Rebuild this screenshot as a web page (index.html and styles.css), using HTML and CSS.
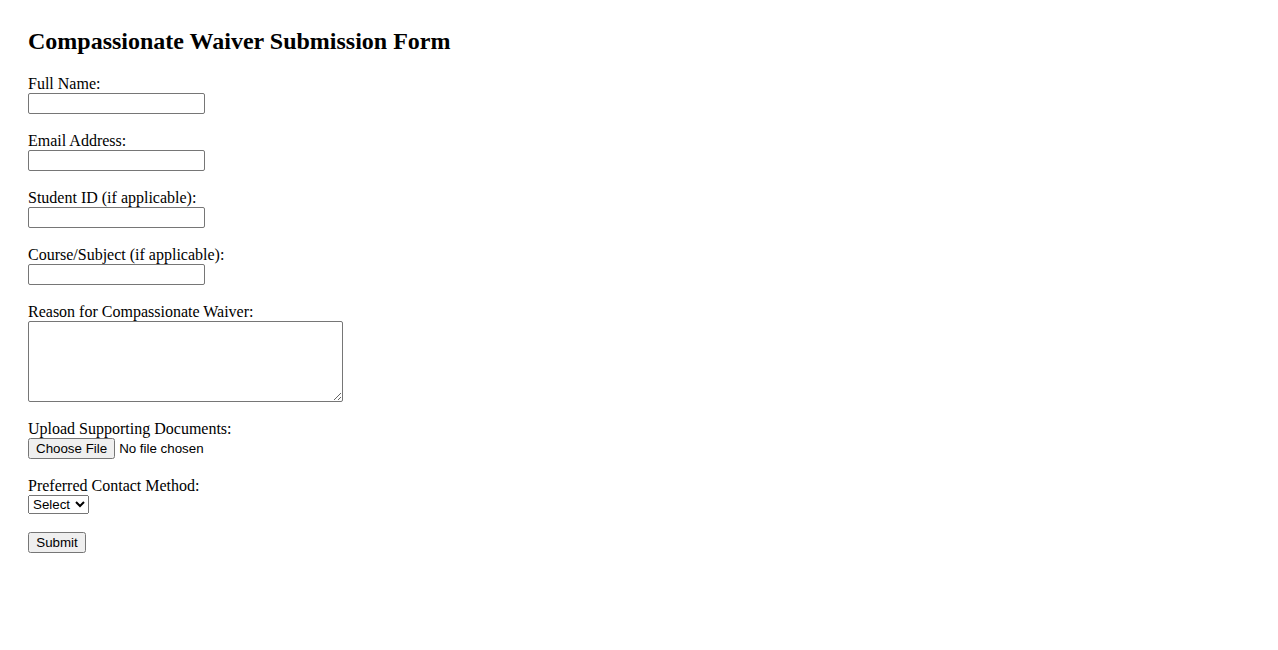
FILE: index.html
```html
<!DOCTYPE html>
<html lang="en">
<head>
<meta charset="utf-8">
<title>Compassionate Waiver Submission Form</title>
<link rel="stylesheet" href="styles.css">
</head>
<body>
<h2 class="title">Compassionate Waiver Submission Form</h2>
<form class="waiver-form">
<label for="name">Full Name:</label><br>
<input type="text" id="name" name="name" class="field"><br><br>
<label for="email">Email Address:</label><br>
<input type="email" id="email" name="email" class="field"><br><br>
<label for="sid">Student ID (if applicable):</label><br>
<input type="text" id="sid" name="sid" class="field"><br><br>
<label for="course">Course/Subject (if applicable):</label><br>
<input type="text" id="course" name="course" class="field"><br><br>
<label for="reason">Reason for Compassionate Waiver:</label><br>
<textarea id="reason" name="reason" class="reason"></textarea><br><br>
<label for="docs">Upload Supporting Documents:</label><br>
<input type="file" id="docs" name="docs" class="file"><br><br>
<label for="contact">Preferred Contact Method:</label><br>
<select id="contact" name="contact" class="select">
<option>Select</option>
<option>Email</option>
<option>Phone</option>
</select><br><br>
<input type="submit" value="Submit" class="submit">
</form>
</body>
</html>
```

FILE: styles.css
```css
html, body {
  background: #ffffff;
}
body {
  margin: 0;
  padding: 28px;
  font-family: "Liberation Serif", "Times New Roman", serif;
  font-size: 16px;
  color: #000;
}
.title {
  font-size: 24px;
  font-weight: bold;
  margin: 0 0 20px 0;
}
.field,
.file,
.select,
.submit {
  font-family: "Liberation Sans", Arial, sans-serif;
  font-size: 13.333px;
}
.field {
  width: 177px;
  height: 21px;
  box-sizing: border-box;
  border: 1px solid #767676;
  border-radius: 2px;
  padding: 1px 2px;
  margin: 0;
}
.reason {
  width: 315px;
  height: 81px;
  box-sizing: border-box;
  border: 1px solid #767676;
  border-radius: 2px;
  margin: 0;
  vertical-align: bottom;
}
.file {
  margin: 0;
}
.select {
  margin: 0;
  height: 19px;
}
.submit {
  margin: 0;
  width: 58px;
  padding: 1px 6px;
}
```
